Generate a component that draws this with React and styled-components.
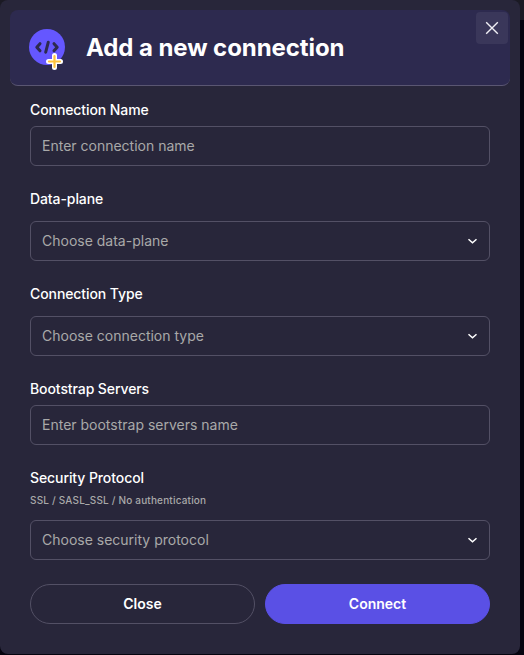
import React from "react";
import styled, { createGlobalStyle } from "styled-components";

const GlobalStyle = createGlobalStyle`
  *, *::before, *::after { box-sizing: border-box; }
  html { background: linear-gradient(#1b1a24 20px, #05040f 20px) no-repeat #05040f; }
  body { margin: 0; font-family: Inter, sans-serif; color: #fff; overflow: hidden; }
  button, input { font: inherit; color: inherit; margin: 0; }
`;

const Dialog = styled.section`
  width: 520px;
  height: 654px;
  padding: 10px;
  background: #28263a;
  border-radius: 8px;
`;

const Header = styled.header`
  display: flex;
  align-items: center;
  height: 76px;
  padding-left: 18px;
  background: #2d2a4f;
  border-bottom: 1px solid #5a5672;
  border-radius: 8px;
`;

const Title = styled.h1`
  flex: 1;
  margin: 0 0 0 18px;
  font-size: 24px;
  line-height: 32px;
  font-weight: 700;
  letter-spacing: -0.08px;
`;

const IconButton = styled.button`
  display: flex;
  align-items: center;
  justify-content: center;
  align-self: flex-start;
  width: 32px;
  height: 32px;
  margin: 2px 2px 0 0;
  padding: 0;
  border: 0;
  border-radius: 4px;
  background: #3a375a;
`;

const Form = styled.form`
  display: flex;
  flex-direction: column;
  padding: 14px 20px 0;
`;

const Field = styled.div`
  display: flex;
  flex-direction: column;
  margin-bottom: ${(p) => p.$after ?? 23}px;
`;

const Label = styled.label`
  font-size: 14px;
  line-height: 20px;
  font-weight: 500;
  letter-spacing: -0.09px;
`;

const Hint = styled.span`
  margin-top: 4px;
  font-size: 10px;
  line-height: 16px;
  font-weight: 500;
  letter-spacing: 0.18px;
  color: #a9a9a9;
`;

const Control = styled.div`
  display: flex;
  align-items: center;
  justify-content: space-between;
  height: 40px;
  margin-top: ${(p) => p.$gap ?? 6}px;
  padding: 0 11px;
  border: 1px solid #535065;
  border-radius: 6px;
  font-size: 14px;
  color: #a9a9a9;
`;

const Placeholder = styled.span`
  padding-bottom: 2px;
`;

const TextInput = styled.input`
  flex: 1;
  min-width: 0;
  height: 100%;
  padding: 0 0 2px;
  border: 0;
  outline: 0;
  background: transparent;
  &::placeholder { color: #a9a9a9; opacity: 1; }
`;

const Actions = styled.div`
  display: grid;
  grid-template-columns: 1fr 1fr;
  gap: 10px;
`;

const Button = styled.button`
  height: 40px;
  padding: 0 0 2px;
  border: 1px solid ${(p) => (p.$primary ? "#5a50e5" : "#535065")};
  border-radius: 20px;
  background: ${(p) => (p.$primary ? "#5a50e5" : "transparent")};
  font-size: 14px;
  font-weight: 600;
`;

const Logo = styled.svg`
  width: 40px;
  height: 41px;
  overflow: visible;
`;

const ConnectionIcon = () => (
  <Logo viewBox="0 0 40 41" fill="none">
    <circle cx="19" cy="20" r="18" fill="#6557ff" />
    <g stroke="#2d2a4f" strokeWidth="3" strokeLinecap="round" strokeLinejoin="round">
      <path d="M12 16.7L8.8 20.2L12 23.8M26 16.7L29.2 20.2L26 23.8M20.3 15.2L17.7 25.2" />
    </g>
    <path d="M26.5 28.5V40.5M20.5 34.5H32.5" stroke="#fff" strokeWidth="5" strokeLinecap="round" />
    <path d="M26.5 29V40M21 34.5H32" stroke="#ffc33c" strokeWidth="2.2" strokeLinecap="round" />
  </Logo>
);

const CrossIcon = () => (
  <svg width="14" height="14" viewBox="0 0 14 14" stroke="#f0eff5" strokeWidth="1.4">
    <path d="M1.2 1.2L12.8 12.8M12.8 1.2L1.2 12.8" />
  </svg>
);

const Chevron = () => (
  <svg width="11" height="8" viewBox="0 0 11 8" fill="none" stroke="#fff" strokeWidth="1.5">
    <path d="M1.5 2.2L5.5 5.8L9.5 2.2" />
  </svg>
);

const TextField = ({ label, placeholder, after }) => (
  <Field $after={after}>
    <Label>{label}</Label>
    <Control><TextInput placeholder={placeholder} aria-label={label} /></Control>
  </Field>
);

const SelectField = ({ label, placeholder, hint, gap = 12, after }) => (
  <Field $after={after}>
    <Label>{label}</Label>
    {hint && <Hint>{hint}</Hint>}
    <Control $gap={gap}>
      <Placeholder>{placeholder}</Placeholder>
      <Chevron />
    </Control>
  </Field>
);

export default function App() {
  return (
    <>
      <GlobalStyle />
      <Dialog role="dialog" aria-label="Add a new connection">
        <Header>
          <ConnectionIcon />
          <Title>Add a new connection</Title>
          <IconButton type="button" aria-label="Dismiss"><CrossIcon /></IconButton>
        </Header>
        <Form>
          <TextField label="Connection Name" placeholder="Enter connection name" />
          <SelectField label="Data-plane" placeholder="Choose data-plane" />
          <SelectField label="Connection Type" placeholder="Choose connection type" />
          <TextField label="Bootstrap Servers" placeholder="Enter bootstrap servers name" />
          <SelectField
            label="Security Protocol"
            hint="SSL / SASL_SSL / No authentication"
            placeholder="Choose security protocol"
            after={24}
          />
          <Actions>
            <Button type="button">Close</Button>
            <Button type="button" $primary>Connect</Button>
          </Actions>
        </Form>
      </Dialog>
    </>
  );
}
